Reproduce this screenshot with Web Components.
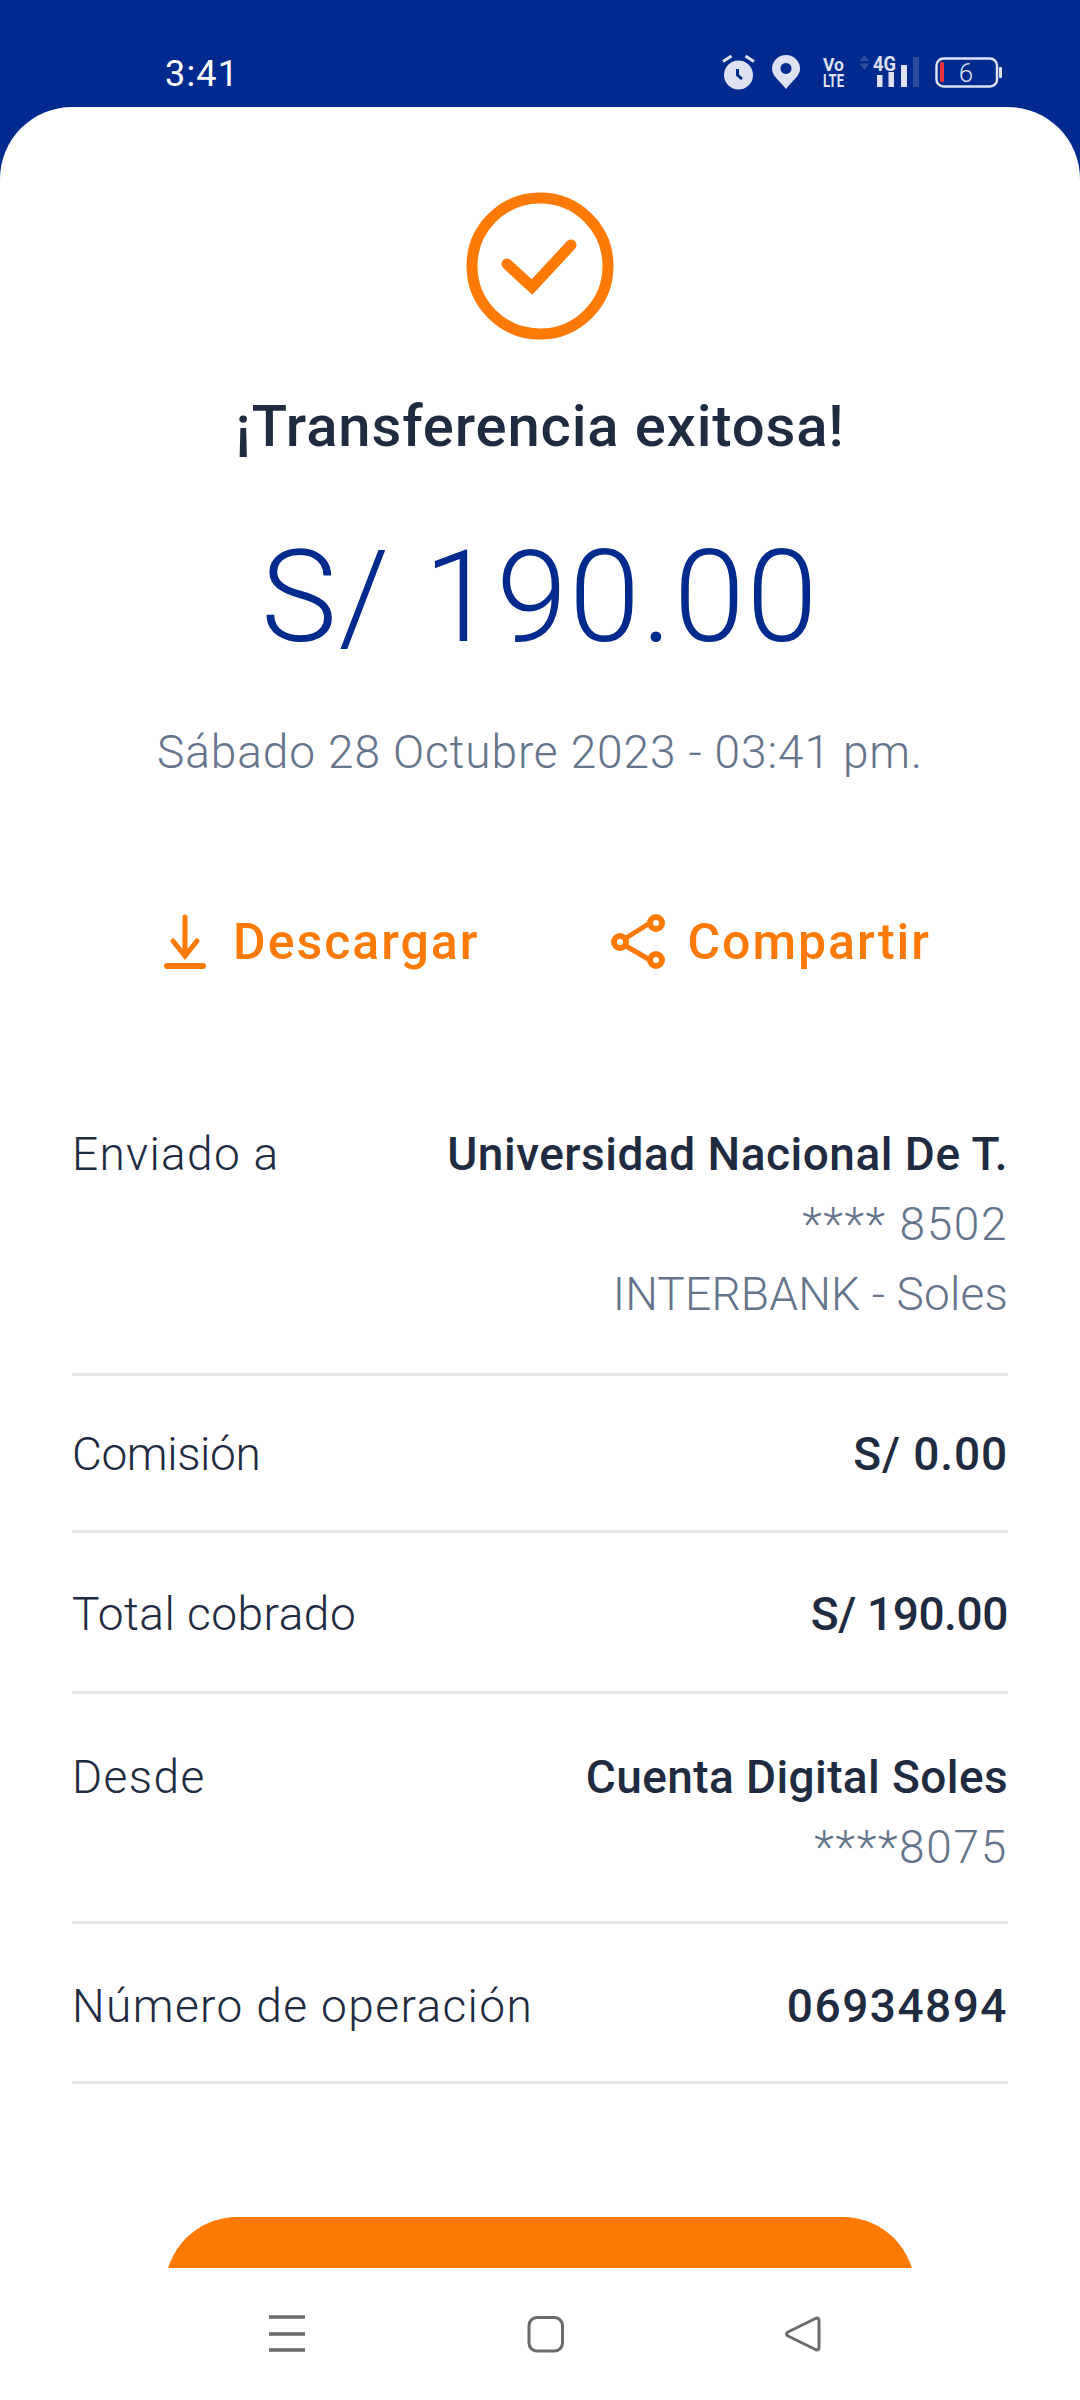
<!DOCTYPE html>
<html><head><meta charset="utf-8"><style>
html,body{margin:0;padding:0;background:#fff}
body{width:1080px;height:2400px;overflow:hidden;font-family:Roboto,"Noto Sans",sans-serif;display:flex;flex-direction:column}
</style></head><body>
<app-screen>
  <status-bar slot="status"></status-bar>
  <success-head></success-head>
  <action-bar></action-bar>
  <detail-list>
    <detail-row pt="30" pb="44" ls="1.3" label="Enviado a"><b style="letter-spacing:.5px">Universidad Nacional De T.</b><i style="letter-spacing:1.6px">**** 8502</i><i style="letter-spacing:.2px">INTERBANK - Soles</i></detail-row>
    <detail-row pt="43" pb="41" ls="-.4" label="Comisión"><b style="letter-spacing:.9px">S/ 0.00</b></detail-row>
    <detail-row pt="46" pb="42" ls=".5" label="Total cobrado"><b style="letter-spacing:-.4px">S/ 190.00</b></detail-row>
    <detail-row pt="48" pb="39" ls="1.4" label="Desde"><b style="letter-spacing:.4px">Cuenta Digital Soles</b><i style="letter-spacing:1.7px">****8075</i></detail-row>
    <detail-row pt="47" pb="40" ls="1.4" label="Número de operación"><b style="letter-spacing:1.5px">06934894</b></detail-row>
  </detail-list>
  <cta-button></cta-button>
  <nav-bar slot="nav"></nav-bar>
</app-screen>
<script>
function def(name,html){customElements.define(name,class extends HTMLElement{connectedCallback(){if(this.shadowRoot)return;const s=this.attachShadow({mode:'open'});s.innerHTML=html;}});}
def('app-screen',`<style>:host{display:flex;flex-direction:column;width:1080px;height:2400px;background:#002a8d}
.card{flex:1;min-height:0;overflow:hidden;background:#fff;border-radius:72px 72px 0 0;display:flex;flex-direction:column}
</style><slot name="status"></slot><div class="card"><slot></slot></div><slot name="nav"></slot>`);
def('status-bar',`<style>:host{display:flex;align-items:flex-start;height:107px;box-sizing:border-box;padding:50px 75px 0 165px;color:#fff}
.t{margin-top:2px;font:400 36px/44px Roboto,sans-serif;letter-spacing:1.2px}
svg{display:block;margin-left:auto}
text{font-family:Roboto,sans-serif}</style>
<span class="t">3:41</span>
<svg width="290" height="44" viewBox="715 50 290 44" fill="#dde1f1">
<circle cx="738.500" cy="75" r="14.500"/><path d="M723 61.500l8.500-5.500M754 61.500l-8.500-5.500" stroke="#dde1f1" stroke-width="3" fill="none"/><path d="M737.500 69v6l4.500 4" stroke="#002a8d" stroke-width="3" fill="none"/>
<path fill-rule="evenodd" d="M786 89C779 80 772 76 772 69a14 14 0 0 1 28 0C800 76 793 80 786 89zM786 63a5.500 5.500 0 1 0 .01 0z"/>
<text x="823" y="71" font-size="19" font-weight="700" textLength="21" lengthAdjust="spacingAndGlyphs">Vo</text>
<text x="823" y="87" font-size="19" font-weight="700" textLength="21" lengthAdjust="spacingAndGlyphs">LTE</text>
<path d="M859.500 61l5-6 5 6zM859.500 63.500l5 6.500 5-6.500z" fill="#2f4ea3"/>
<text x="873" y="71" font-size="20" font-weight="700" textLength="23" lengthAdjust="spacingAndGlyphs">4G</text>
<rect x="877" y="75" width="5.500" height="12"/><rect x="888.500" y="72" width="5.500" height="15"/><rect x="901" y="65" width="6" height="22"/><rect x="913" y="57" width="6" height="30" fill="#2c4a9e"/>
<rect x="936.500" y="58.500" width="60.500" height="28" rx="7" fill="none" stroke="#dde1f1" stroke-width="2.500"/>
<rect x="940" y="62" width="4" height="20" rx="1" fill="#e8323c"/>
<rect x="999" y="67" width="3" height="11" rx="1"/>
<text x="966" y="82" font-size="26" font-weight="300" text-anchor="middle">6</text></svg>`);
def('success-head',`<style>:host{display:flex;flex-direction:column;align-items:center;padding-top:85px}
svg{display:block}
h1{margin:46px 0 0;font:500 58px/80px Roboto,sans-serif;color:#1e2b40;letter-spacing:.85px}
.amt{margin-top:56px;font:300 128px/150px Roboto,sans-serif;color:#002a8d;letter-spacing:1.6px}
.dt{margin-top:50px;font:300 46px/60px Roboto,sans-serif;color:#64748b;letter-spacing:.9px}
</style>
<svg width="148" height="148" viewBox="0 0 148 148"><circle cx="74" cy="74" r="68" fill="none" stroke="#ff7a05" stroke-width="11"/><path d="M41 72l25 23 39-42" fill="none" stroke="#ff7a05" stroke-width="11" stroke-linecap="round"/></svg>
<h1>¡Transferencia exitosa!</h1>
<div class="amt">S/ 190.00</div>
<div class="dt">Sábado 28 Octubre 2023 - 03:41 pm.</div>`);
def('action-bar',`<style>:host{display:flex;padding:125px 0 0 163px;color:#ff7a05;font:500 50px/70px Roboto,sans-serif;letter-spacing:2px}
a{display:flex;align-items:center;gap:26px}
a+a{margin-left:131px;gap:21px}svg{display:block}</style>
<a><svg width="44" height="56" viewBox="0 0 44 56" fill="none" stroke="#ff7a05" stroke-linecap="round"><path d="M22 3v38M10 27l12 15 12-15" stroke-width="5"/><path d="M4 52h36" stroke-width="6"/></svg>Descargar</a>
<a><svg width="56" height="56" viewBox="0 0 56 56" fill="none" stroke="#ff7a05"><circle cx="46" cy="9" r="6" stroke-width="6"/><circle cx="10" cy="28" r="6" stroke-width="6"/><circle cx="46" cy="46" r="6" stroke-width="6"/><path d="M16 24l24-15M16 32l24 14" stroke-width="5"/></svg>Compartir</a>`);
def('detail-list',`<style>:host{display:block;margin-top:112px;padding:0 72px}</style><slot></slot>`);
customElements.define('detail-row',class extends HTMLElement{connectedCallback(){if(this.shadowRoot)return;const s=this.attachShadow({mode:'open'});s.innerHTML=`<style>:host{display:flex;justify-content:space-between;border-bottom:3px solid #e5e7eb;padding:${this.getAttribute('pt')}px 0 ${this.getAttribute('pb')}px}
.l{font:300 46px/70px Roboto,sans-serif;color:#1e2b40;letter-spacing:${this.getAttribute('ls')}px}
.r{display:flex;flex-direction:column;align-items:flex-end}
::slotted(b){font:500 46px/70px Roboto,sans-serif;color:#1e2b40}
::slotted(i){font:300 46px/70px Roboto,sans-serif;color:#64748b}</style><span class="l">${this.getAttribute('label')}</span><div class="r"><slot></slot></div>`;}});
def('cta-button',`<style>:host{display:block;margin:133px 165px 0;height:144px;background:#ff7a05;border-radius:72px;flex:none}</style>`);
def('nav-bar',`<style>:host{display:block;height:132px;background:#fff}svg{display:block}</style>
<svg width="1080" height="132" viewBox="0 0 1080 132" fill="none" stroke="#6b6b6b"><path d="M269 49h36M269 66h36M269 82h36" stroke-width="3.500"/><rect x="529" y="49.500" width="33.500" height="33.500" rx="8" stroke-width="3"/><path d="M815.500 50.500L788 64q-3 2 0 4L815.500 81.500q3.500 1.500 3.500-2V52.500q0-3.500-3.500-2z" stroke-width="3" stroke-linejoin="round"/></svg>`);
</script></body></html>
